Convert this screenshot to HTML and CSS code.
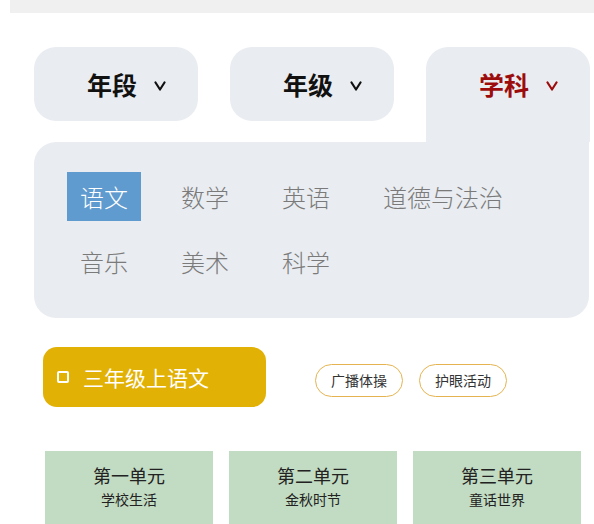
FILE: index.html
```html
<!DOCTYPE html>
<html lang="zh-CN">
<head>
    <meta charset="UTF-8">
    <meta name="viewport" content="width=device-width, initial-scale=1.0">
    <title>课程选择</title>
    <link rel="stylesheet" href="styles.css">
</head>
<body>
    <div class="topbar"></div>

    <div class="tabs">
        <div class="tab">年段<svg class="chev" viewBox="0 0 12 10"><polyline points="1.5,1.5 6,8.5 10.5,1.5"/></svg></div>
        <div class="tab">年级<svg class="chev" viewBox="0 0 12 10"><polyline points="1.5,1.5 6,8.5 10.5,1.5"/></svg></div>
        <div class="tab active">学科<svg class="chev" viewBox="0 0 12 10"><polyline points="1.5,1.5 6,8.5 10.5,1.5"/></svg></div>
    </div>

    <div class="panel">
        <span class="subject selected">语文</span>
        <span class="subject">数学</span>
        <span class="subject">英语</span>
        <span class="subject">道德与法治</span>
        <span class="subject">音乐</span>
        <span class="subject">美术</span>
        <span class="subject">科学</span>
    </div>

    <div class="actions">
        <div class="book"><span class="box"></span>三年级上语文</div>
        <div class="pills">
            <span class="pill">广播体操</span>
            <span class="pill">护眼活动</span>
        </div>
    </div>

    <div class="units">
        <div class="unit">
            <div class="unit-title">第一单元</div>
            <div class="unit-sub">学校生活</div>
        </div>
        <div class="unit">
            <div class="unit-title">第二单元</div>
            <div class="unit-sub">金秋时节</div>
        </div>
        <div class="unit">
            <div class="unit-title">第三单元</div>
            <div class="unit-sub">童话世界</div>
        </div>
    </div>
</body>
</html>
```

FILE: styles.css
```css
body {
    margin: 0;
    padding: 0;
    background: #fff;
    font-family: "Noto Sans CJK SC", "Noto Sans", sans-serif;
    color: #222;
    overflow: hidden;
}
.topbar {
    margin-left: 10px;
    height: 13px;
    background: #f0f0f0;
}
.tabs {
    display: flex;
    align-items: flex-start;
    gap: 32px;
    margin: 34px 0 0 34px;
    width: 556px;
}
.tab {
    box-sizing: border-box;
    width: 164px;
    height: 74px;
    padding-left: 53px;
    display: flex;
    align-items: center;
    background: #e9ecf0;
    border-radius: 22px;
    font-size: 25px;
    font-weight: 700;
    color: #111;
    white-space: nowrap;
}
.tab .chev {
    width: 12px;
    height: 10px;
    margin-left: 17px;
    margin-top: 3px;
    fill: none;
    stroke: #111;
    stroke-width: 2.2;
    stroke-linecap: round;
    stroke-linejoin: round;
}
.tab.active {
    height: 95px;
    padding-bottom: 21px;
    border-radius: 22px 22px 0 0;
    color: #9c0c0c;
}
.tab.active .chev {
    stroke: #9c0c0c;
}
.panel {
    box-sizing: border-box;
    width: 555px;
    margin-left: 34px;
    padding: 30px 33px 32px 33px;
    background: #e9ecf0;
    border-radius: 22px 0 22px 22px;
    display: flex;
    flex-wrap: wrap;
    column-gap: 27px;
    row-gap: 16px;
}
.subject {
    height: 49px;
    line-height: 49px;
    padding: 0 13px;
    font-size: 24px;
    font-weight: 300;
    color: #7a7a7a;
}
.subject.selected {
    background: #5f9bcf;
    color: #fff;
}
.actions {
    display: flex;
    align-items: center;
    margin: 29px 0 0 43px;
}
.book {
    box-sizing: border-box;
    width: 223px;
    height: 60px;
    padding-left: 14px;
    display: flex;
    align-items: center;
    background: #e2b105;
    border-radius: 14px;
    color: #fff;
    font-size: 21px;
}
.book .box {
    box-sizing: border-box;
    width: 12px;
    height: 12px;
    margin-right: 14px;
    border: 2.5px solid #fff;
    border-radius: 2px;
}
.pills {
    display: flex;
    gap: 16px;
    margin-left: 49px;
    margin-top: 6px;
}
.pill {
    box-sizing: border-box;
    height: 33px;
    line-height: 31px;
    padding: 0 15px;
    border: 1.5px solid #e5b450;
    border-radius: 17px;
    font-size: 14px;
    color: #333;
}
.units {
    display: flex;
    gap: 16px;
    margin: 44px 0 0 45px;
}
.unit {
    width: 168px;
    height: 100px;
    padding-top: 11px;
    background: #c2dcc3;
    text-align: center;
}
.unit-title {
    font-size: 18px;
    line-height: 26px;
    color: #222;
}
.unit-sub {
    font-size: 14px;
    line-height: 22px;
    color: #222;
}
```
